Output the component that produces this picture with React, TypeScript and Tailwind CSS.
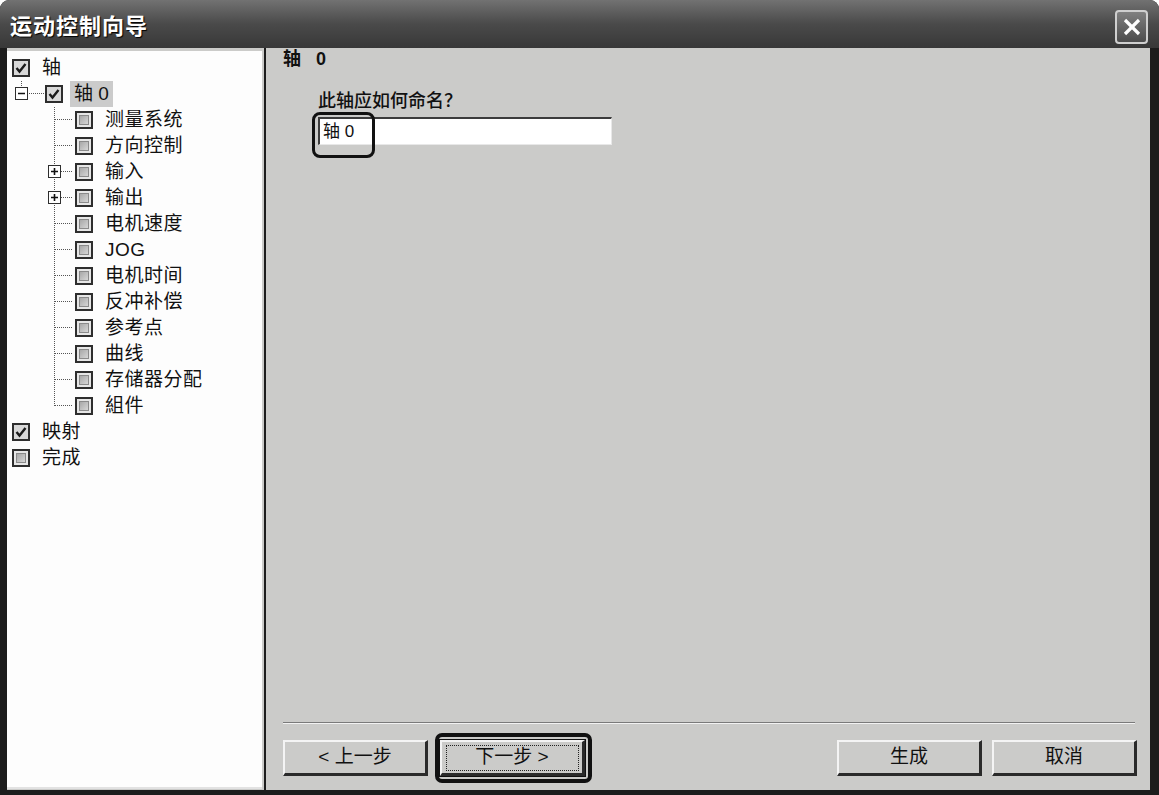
import React from "react";

const CJK = "font-['Liberation_Sans','Noto_Sans_CJK_SC',sans-serif]";

type Node = {
  label: string;
  level: 0 | 1 | 2;
  checked?: boolean;
  expander?: "plus" | "minus";
  last?: boolean;
  selected?: boolean;
};

const tree: Node[] = [
  { label: "轴", level: 0, checked: true },
  { label: "轴 0", level: 1, checked: true, expander: "minus", selected: true },
  { label: "测量系统", level: 2 },
  { label: "方向控制", level: 2 },
  { label: "输入", level: 2, expander: "plus" },
  { label: "输出", level: 2, expander: "plus" },
  { label: "电机速度", level: 2 },
  { label: "JOG", level: 2 },
  { label: "电机时间", level: 2 },
  { label: "反冲补偿", level: 2 },
  { label: "参考点", level: 2 },
  { label: "曲线", level: 2 },
  { label: "存储器分配", level: 2 },
  { label: "組件", level: 2, last: true },
  { label: "映射", level: 0, checked: true },
  { label: "完成", level: 0 },
];

function CheckBox({ checked }: { checked?: boolean }) {
  if (checked) {
    return (
      <div className="flex h-[18px] w-[18px] shrink-0 items-center justify-center border-2 border-[#2e2e2e] bg-[#d8d8d8]">
        <svg width="12" height="12" viewBox="0 0 12 12">
          <polyline points="1.5,6 4.5,9.5 10.5,2" fill="none" stroke="#1a1a1a" strokeWidth="2.4" />
        </svg>
      </div>
    );
  }
  return (
    <div className="flex h-[18px] w-[18px] shrink-0 items-center justify-center border-2 border-[#2e2e2e] bg-[#e6e6e6]">
      <div className="h-[10px] w-[10px] border border-[#8a8a8a] bg-linear-to-br from-[#a8a8a8] to-[#d6d6d6]" />
    </div>
  );
}

function ExpBox({ x, kind }: { x: number; kind: "plus" | "minus" }) {
  return (
    <g>
      <rect x={x + 0.5} y={6.5} width={12} height={12} fill="#fff" stroke="#2e2e2e" />
      <line x1={x + 3} y1={12.5} x2={x + 10} y2={12.5} stroke="#111" strokeWidth="1.6" />
      {kind === "plus" && <line x1={x + 6.5} y1={9} x2={x + 6.5} y2={16} stroke="#111" strokeWidth="1.6" />}
    </g>
  );
}

function TreeRow({ node }: { node: Node }) {
  let gutter: React.ReactNode;
  if (node.level === 0) {
    gutter = <div className="w-[5px] shrink-0" />;
  } else if (node.level === 1) {
    gutter = (
      <svg width="38" height="26" className="shrink-0">
        <line x1="14.5" y1="0" x2="14.5" y2="6" stroke="#555" strokeDasharray="1 1" />
        <line x1="22" y1="12.5" x2="37" y2="12.5" stroke="#555" strokeDasharray="1 1" />
        <ExpBox x={8} kind={node.expander ?? "minus"} />
      </svg>
    );
  } else {
    gutter = (
      <svg width="68" height="26" className="shrink-0">
        <line x1="47.5" y1="0" x2="47.5" y2={node.last ? 13 : 26} stroke="#555" strokeDasharray="1 1" />
        <line x1="48" y1="12.5" x2="66" y2="12.5" stroke="#555" strokeDasharray="1 1" />
        {node.expander && <ExpBox x={41} kind={node.expander} />}
      </svg>
    );
  }
  return (
    <div className="flex h-[26px] items-center">
      {gutter}
      <CheckBox checked={node.checked} />
      <span
        className={
          node.level === 1
            ? "ml-[7px] bg-[#cbcbcb] px-[4px] text-[19px] leading-[26px] text-[#111]"
            : "ml-[12px] text-[19px] leading-[26px] tracking-[0.5px] text-[#111]"
        }
      >
        {node.label}
      </span>
    </div>
  );
}

function WinButton({ label, focused }: { label: string; focused?: boolean }) {
  return (
    <div
      className={
        "flex h-[36px] w-[145px] items-center justify-center border-t-2 border-l-2 border-b-[3px] border-r-[3px] border-t-[#f4f4f4] border-l-[#f4f4f4] border-b-[#2a2a2a] border-r-[#2a2a2a] bg-[#cbcbc9] text-[19px] text-[#111]" +
        (focused ? " outline outline-1 outline-[#111]" : "")
      }
    >
      {focused ? (
        <div className="flex h-[26px] w-[133px] items-center justify-center border border-dotted border-[#222]">{label}</div>
      ) : (
        label
      )}
    </div>
  );
}

export default function App() {
  return (
    <div className={`h-[795px] w-[1159px] bg-white ${CJK}`}>
      <div className="flex h-full flex-col overflow-hidden rounded-t-[9px] bg-[#1c1c1c]">
        {/* title bar */}
        <div className="flex h-[48px] shrink-0 items-center justify-between bg-linear-to-b from-[#727272] via-[#4a4a4a] to-[#383838] pt-[6px] pl-[10px] pr-[11px]">
          <span className="text-[22px] font-bold leading-[24px] tracking-[1px] text-white [text-shadow:1px_1px_1px_#000]">
            运动控制向导
          </span>
          <div className="flex h-[34px] w-[33px] items-center justify-center rounded-[4px] border-2 border-[#cfcfcf] bg-linear-to-b from-[#808080] to-[#4c4c4c]">
            <svg width="20" height="20" viewBox="0 0 20 20">
              <line x1="3" y1="3" x2="17" y2="17" stroke="#fff" strokeWidth="3.2" />
              <line x1="17" y1="3" x2="3" y2="17" stroke="#fff" strokeWidth="3.2" />
            </svg>
          </div>
        </div>

        {/* body */}
        <div className="flex flex-1 pl-[7px] pr-[9px] pb-[5px]">
          {/* left tree */}
          <div className="flex w-[259px] shrink-0 border-r-2 border-[#1c1c1c] bg-[#cbcbc9] pt-[3px] pr-[2px] pb-[1px]">
            <div className="flex-1 border-b-2 border-[#e2e2e2] bg-[#fdfdfd] pt-[4px]">
              {tree.map((n) => (
                <TreeRow key={n.label} node={n} />
              ))}
            </div>
          </div>

          {/* right content */}
          <div className="relative flex flex-1 flex-col bg-[#cbcbc9] pl-[17px] pr-[13px] pb-[14px]">
            <div className="mt-[1px] text-[18px] font-bold leading-[20px] text-[#111] [word-spacing:10px]">轴 0</div>
            <div className="mt-[22px] ml-[35px] text-[18px] font-medium leading-[20px] text-[#111]">此轴应如何命名？</div>
            <div className="mt-[6px] ml-[35px] flex h-[28px] w-[294px] items-center border-t-2 border-l-2 border-b border-r border-t-[#3c3c3c] border-l-[#3c3c3c] border-b-[#e8e8e8] border-r-[#e8e8e8] bg-white pl-[3px] text-[17px] text-[#111]">
              轴 0
            </div>
            {/* annotation around the name */}
            <div className="absolute top-[64px] left-[46px] h-[46px] w-[63px] rounded-[8px] border-[3px] border-[#111]" />

            <div className="flex-1" />

            <div className="mr-[2px] border-t border-b border-t-[#7a7a7a] border-b-[#f2f2f2]" />

            <div className="mt-[16px] flex items-center">
              <WinButton label="< 上一步" />
              <div className="relative ml-[12px]">
                <WinButton label="下一步 >" focused />
                <div className="absolute -top-[7px] -left-[5px] -right-[7px] -bottom-[7px] rounded-[7px] border-[4px] border-[#111]" />
              </div>
              <div className="flex-1" />
              <WinButton label="生成" />
              <div className="ml-[10px]">
                <WinButton label="取消" />
              </div>
            </div>
          </div>
        </div>
      </div>
    </div>
  );
}
